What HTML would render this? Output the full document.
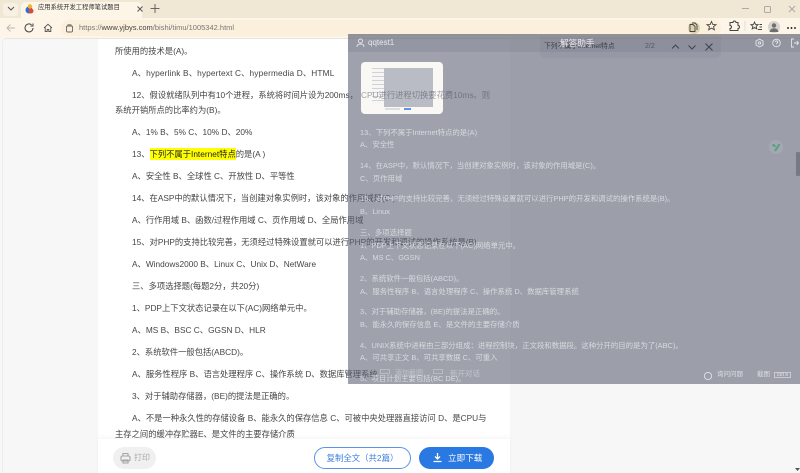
<!DOCTYPE html>
<html><head><meta charset="utf-8"><style>
html,body{margin:0;padding:0;width:800px;height:473px;overflow:hidden;background:#f7f7f7}
body{position:relative;font-family:"Liberation Sans","Noto Sans CJK SC",sans-serif}
.a{position:absolute;white-space:nowrap}
.t{position:absolute;white-space:nowrap;font-size:8.3px;line-height:12px;height:12px;color:#454545}
.o{position:absolute;white-space:nowrap;font-size:7.4px;line-height:12px;height:12px;left:360px;color:#d8dade}
svg{position:absolute;overflow:visible}
</style></head><body>
<!-- browser chrome -->
<div class="a" style="left:0;top:0;width:800px;height:18px;background:#f1e7d5"></div>
<div class="a" style="left:0;top:18px;width:800px;height:20px;background:#fdf5e8"></div>
<div class="a" style="left:3px;top:3px;width:15px;height:13px;background:#f8f0e2;border-radius:3px"></div>
<svg style="left:0;top:0" width="800" height="38" fill="none" stroke="#555" stroke-width="1">
<path d="M8 7l3 3 3-3"/>
<path d="M155 4v9M150.500 8.500h9" stroke="#666"/>
<path d="M15 28H7M10.500 24.500L7 28l3.500 3.500" stroke="#bdb8ae"/>
<path d="M33 28a4 4 0 1 1-1.500-3.200M33 23.500v2.500h-2.500" stroke="#444"/>
<path d="M44 28l4-3.800 4 3.800M45.200 27.500v4h2v-2h1.600v2h2v-4" stroke="#555" stroke-width=".9"/>
<path d="M742 8.500h7" stroke="#aaa"/>
<rect x="764.500" y="6.500" width="6" height="6" rx="1" stroke="#aaa"/>
<path d="M789 6l6 6M795 6l-6 6" stroke="#aaa"/>
</svg>
<div class="a" style="left:21px;top:2px;width:121px;height:16px;background:#fdf5e8;border-radius:5px 5px 0 0"></div>
<svg style="left:24px;top:3px" width="12" height="12"><circle cx="5" cy="7" r="3.500" fill="#2f6fd0"/><circle cx="7" cy="8" r="2.500" fill="#e0483a"/><circle cx="6" cy="3.500" r="2.200" fill="#f0b429"/></svg>
<div class="a" style="left:38px;top:2px;font-size:6.3px;line-height:12px;color:#333">应用系统开发工程师笔试题目</div>
<svg style="left:136px;top:5px" width="10" height="10" fill="none" stroke="#555"><path d="M1.500 1.500l5 5M6.500 1.500l-5 5"/></svg>
<div class="a" style="left:61px;top:20px;width:660px;height:16px;background:#fbf0dc;border-radius:8px"></div>
<svg style="left:65px;top:23px" width="10" height="10" fill="none" stroke="#666" stroke-width=".9"><rect x="1.500" y="3" width="6" height="6" rx="1.200"/><path d="M3 3V1.800h3V3"/></svg>
<div class="a" style="left:79px;top:22px;font-size:7.500px;line-height:12px;color:#777">https://<span style="color:#444">www.yjbys.com</span>/bishi/timu/1005342.html</div>
<!-- page -->
<div class="a" style="left:2px;top:38px;width:798px;height:435px;background:#f7f7f7;border-radius:5px 0 0 0;border-top:1px solid #e9e5dc;border-left:1px solid #f0eee8;box-sizing:border-box"></div>
<div class="a" style="left:98px;top:39px;width:412px;height:434px;background:#fff"></div>
<div class="t" style="left:115px;top:45px">所使用的技术是(A)。</div>
<div class="t" style="left:132px;top:67px;letter-spacing:.14px">A、hyperlink B、hypertext C、hypermedia D、HTML</div>
<div class="t" style="left:132px;top:89px">12、假设就绪队列中有10个进程&#65292;系统将时间片设为200ms&#65292;</div>
<div class="t" style="left:115px;top:104px">系统开销所点的比率约为(B)。</div>
<div class="t" style="left:132px;top:126px">A、1% B、5% C、10% D、20%</div>
<div class="t" style="left:132px;top:148px">13、<span style="background:#ff0;color:#222;display:inline-block;height:12px">下列不属于Internet特点</span>的是(A )</div>
<div class="t" style="left:132px;top:170px">A、安全性 B、全球性 C、开放性 D、平等性</div>
<div class="t" style="left:132px;top:192px">14、在ASP中的默认情况下&#65292;当创建对象实例时&#65292;该对象的作用域是(C )</div>
<div class="t" style="left:132px;top:214px">A、行作用域 B、函数/过程作用域 C、页作用域 D、全局作用域</div>
<div class="t" style="left:132px;top:236px">15、对PHP的支持比较完善&#65292;无须经过特殊设置就可以进行PHP的开发和调试的操作系统是(B)</div>
<div class="t" style="left:132px;top:258px">A、Windows2000 B、Linux C、Unix D、NetWare</div>
<div class="t" style="left:132px;top:280px">三、多项选择题(每题2分&#65292;共20分)</div>
<div class="t" style="left:132px;top:302px">1、PDP上下文状态记录在以下(AC)网络单元中。</div>
<div class="t" style="left:132px;top:324px">A、MS B、BSC C、GGSN D、HLR</div>
<div class="t" style="left:132px;top:346px">2、系统软件一般包括(ABCD)。</div>
<div class="t" style="left:132px;top:368px">A、服务性程序 B、语言处理程序 C、操作系统 D、数据库管理系统</div>
<div class="t" style="left:132px;top:390px">3、对于辅助存储器&#65292;(BE)的提法是正确的。</div>
<div class="t" style="left:132px;top:412px">A、不是一种永久性的存储设备 B、能永久的保存信息 C、可被中央处理器直接访问 D、是CPU与</div>
<div class="t" style="left:115px;top:428px">主存之间的缓冲存贮器E、是文件的主要存储介质</div>
<!-- bottom bar -->
<div class="a" style="left:98px;top:439px;width:412px;height:34px;background:#fff;box-shadow:0 -2px 4px rgba(0,0,0,.04)"></div>
<div class="a" style="left:113px;top:447px;width:43px;height:22px;background:#f0f0f0;border-radius:11px"></div>
<svg style="left:120px;top:452px" width="12" height="12" fill="none" stroke="#a5a5a5" stroke-width="1.100"><rect x="1" y="4" width="9" height="5" rx="1.500"/><path d="M3 4V1.500h5V4M3 8h5v3H3z"/></svg>
<div class="a" style="left:134px;top:452px;font-size:8px;line-height:12px;color:#aaa">打印</div>
<div class="a" style="left:314px;top:447px;width:97px;height:22px;box-sizing:border-box;border:1px solid #5b93e4;border-radius:11px;background:#fff;color:#3f80de;font-size:8.4px;line-height:20px;text-align:center">复制全文&#65288;共2篇&#65289;</div>
<div class="a" style="left:419px;top:447px;width:75px;height:22px;background:#2a78e2;border-radius:11px;color:#fff;font-size:8.6px;line-height:22px;padding-left:29px;box-sizing:border-box">立即下载</div>
<svg style="left:433px;top:453px" width="10" height="10" fill="none" stroke="#fff" stroke-width="1.300"><path d="M4.500 0v5.500M2 3.500l2.500 2.500 2.500-2.500M.5 8.500h8"/></svg>
<!-- overlay panel -->
<div class="a" style="left:348px;top:34px;width:452px;height:350px;background:rgba(95,100,118,.6)"></div>
<div class="a" style="left:348px;top:34px;width:452px;height:18px;background:rgba(70,75,90,.12)"></div>
<svg style="left:356px;top:38px" width="10" height="10" fill="none" stroke="#e4e5e9" stroke-width=".9"><circle cx="4.500" cy="3" r="2"/><path d="M1 9c0-2 1.500-3 3.500-3s3.500 1 3.500 3"/></svg>
<div class="a" style="left:368px;top:37px;font-size:8px;line-height:12px;color:#e6e7ea">qqtest1</div>
<!-- thumbnail -->
<div class="a" style="left:361px;top:62px;width:82px;height:52px;background:#faf8f4;border-radius:4px"></div>
<div class="a" style="left:384px;top:68px;width:49px;height:39px;background:#b9bcc4"></div>
<div class="a" style="left:372px;top:68px;width:12px;height:36px;background:repeating-linear-gradient(#d2d2d2 0 1px,#f6f6f6 1px 4px)"></div>
<div class="a" style="left:404px;top:108px;width:7px;height:2px;background:#5f93e4"></div>
<div class="a" style="left:385px;top:108px;width:15px;height:2px;background:#ddd"></div>
<div class="t" style="left:361px;top:89px;color:rgba(70,72,85,.5)">CPU进行进程切换要花费10ms。则</div>
<!-- overlay text -->
<div class="o" style="top:127px">13、下列不属于Internet特点的是(A)</div>
<div class="o" style="top:139px">A、安全性</div>
<div class="o" style="top:160px">14、在ASP中&#65292;默认情况下&#65292;当创建对象实例时&#65292;该对象的作用域是(C)。</div>
<div class="o" style="top:173px">C、页作用域</div>
<div class="o" style="top:193px">15、对PHP的支持比较完善&#65292;无须经过特殊设置就可以进行PHP的开发和调试的操作系统是(B)。</div>
<div class="o" style="top:206px">B、Linux</div>
<div class="o" style="top:227px">三、多项选择题</div>
<div class="o" style="top:240px">1、PDP上下文状态记录在以下(AC)网络单元中。</div>
<div class="o" style="top:252px">A、MS C、GGSN</div>
<div class="o" style="top:273px">2、系统软件一般包括(ABCD)。</div>
<div class="o" style="top:286px">A、服务性程序 B、语言处理程序 C、操作系统 D、数据库管理系统</div>
<div class="o" style="top:306px">3、对于辅助存储器&#65292;(BE)的提法是正确的。</div>
<div class="o" style="top:319px">B、能永久的保存信息 E、是文件的主要存储介质</div>
<div class="o" style="top:340px">4、UNIX系统中进程由三部分组成&#65306;进程控制块&#65292;正文段和数据段。这种分开的目的是为了(ABC)。</div>
<div class="o" style="top:352px">A、可共享正文 B、可共享数据 C、可重入</div>
<div class="o" style="top:373px;clip-path:inset(0 0 1px 0)">5、项目计划主要包括(BC DE)。</div>
<!-- find bar -->
<div class="a" style="left:540px;top:36px;width:181px;height:22px;background:rgba(90,95,110,.08);border-radius:0 0 5px 5px"></div>
<div class="a" style="left:544px;top:41px;font-size:6.800px;line-height:12px;color:#3e4048">下列不属于Internet特点</div>
<div class="a" style="left:560px;top:37px;font-size:8.600px;line-height:12px;color:#e8e9ec">解答助手</div>
<div class="a" style="left:645px;top:41px;font-size:7px;line-height:12px;color:#555863">2/2</div>
<div class="a" style="left:663px;top:42px;width:1px;height:10px;background:#8d909b"></div>
<svg style="left:670px;top:42px" width="46" height="10" fill="none" stroke="#3f424b" stroke-width="1"><path d="M2 6.500l3.500-3.500 3.500 3.500M18.500 3.500l3.500 3.500 3.500-3.500M35.500 1.500l7 7M42.500 1.500l-7 7"/></svg>
<!-- toolbar icons -->
<div class="a" style="left:688px;top:22px;width:12px;height:12px;border-radius:50%;background:#dfd2b0"></div>
<svg style="left:680px;top:18px" width="120" height="16" fill="none" stroke="#444" stroke-width=".9">
<path d="M10 6.500h3l2 2v5h-5zM12 5h3l2 2v5"/>
<path d="M31.500 3.500l1.300 3 3.200.2-2.500 2 .9 3.100-2.900-1.700-2.900 1.700.9-3.100-2.500-2 3.200-.2z"/>
<path d="M50 5h3a1.500 1.500 0 0 1 3 0h2v3a1.500 1.500 0 0 1 0 3v2h-8v-2a1.500 1.500 0 0 0 0-3z" stroke-width="1" transform="translate(0 -.5)"/>
<path d="M65 3v10" stroke="#ddd"/>
<path d="M74.500 4l1 2.400 2.600.2-2 1.700.7 2.600-2.300-1.400-2.300 1.400.7-2.600-2-1.700 2.600-.2zM79.500 6.500h2.500M79.500 9h2.500M78 11.500h4"/>
</svg>
<svg style="left:768px;top:21px" width="13" height="13"><circle cx="6" cy="6" r="6" fill="#d8d4cc"/><circle cx="6" cy="4.500" r="2.200" fill="#6f6f6f"/><path d="M1.500 11c.5-2.500 2.300-3.700 4.500-3.700s4 1.200 4.500 3.700z" fill="#6f6f6f"/></svg>
<div class="a" style="left:787px;top:27px;width:9px;height:2px;background:radial-gradient(circle at 1px 1px,#333 1px,transparent 1px) 0 0/3.500px 2px"></div>
<!-- panel top-right icons -->
<svg style="left:754px;top:38px" width="44" height="10" fill="none" stroke="#e6e7ea" stroke-width=".9"><path d="M5.500 1l3.500 2v4l-3.500 2-3.500-2V3z"/><circle cx="5.500" cy="5" r="1.200"/><circle cx="22.500" cy="5" r="3.800"/><path d="M21.300 4c.2-1.500 2.500-1.200 2.400.1 0 1-1.200 1-1.200 2M22.500 7.200v.3"/><path d="M40 1h-2.500v8H40M40 5h4.500M42.800 3.200L44.500 5l-1.700 1.800"/></svg>
<!-- green badge -->
<div class="a" style="left:769px;top:140px;width:14px;height:14px;border-radius:50%;background:#a5a8b2"></div>
<svg style="left:771px;top:143px" width="10" height="9" fill="none" stroke="#52a37c" stroke-width="2"><path d="M1.500 1.500L4.500 3.500M8.500 1L4 8"/></svg>
<div class="a" style="left:796px;top:152px;width:4px;height:24px;background:#777a85;border-radius:1px"></div>
<!-- panel bottom -->
<svg style="left:703px;top:371px" width="10" height="10" fill="none" stroke="#e2e3e7" stroke-width=".9"><circle cx="5" cy="5" r="3.600"/></svg>
<div class="a" style="left:717px;top:369px;font-size:6.500px;line-height:12px;color:#dcdde2">询问问题</div>
<div class="a" style="left:757px;top:369px;font-size:6.500px;line-height:12px;color:#dcdde2">截图</div>
<div class="a" style="left:774px;top:372px;width:17px;height:6px;box-sizing:border-box;border:1px solid #c9cbd1;font-size:4.500px;line-height:4px;text-align:center;color:#eceded">Ctrl S</div>
<div class="a" style="left:380px;top:369px;width:10px;height:5px;border:1px solid #b9bbc3;box-sizing:border-box"></div>
<div class="a" style="left:395px;top:368px;font-size:7px;line-height:12px;color:#c3c5cc">添加截图</div>
<div class="a" style="left:433px;top:369px;width:10px;height:5px;border:1px solid #b9bbc3;box-sizing:border-box"></div>
<div class="a" style="left:450px;top:368px;font-size:7.500px;line-height:12px;color:#c3c5cc">新开对话</div>
<svg style="left:795px;top:468px" width="5" height="4"><path d="M0 0h5L2.500 3z" fill="#555"/></svg>
</body></html>
